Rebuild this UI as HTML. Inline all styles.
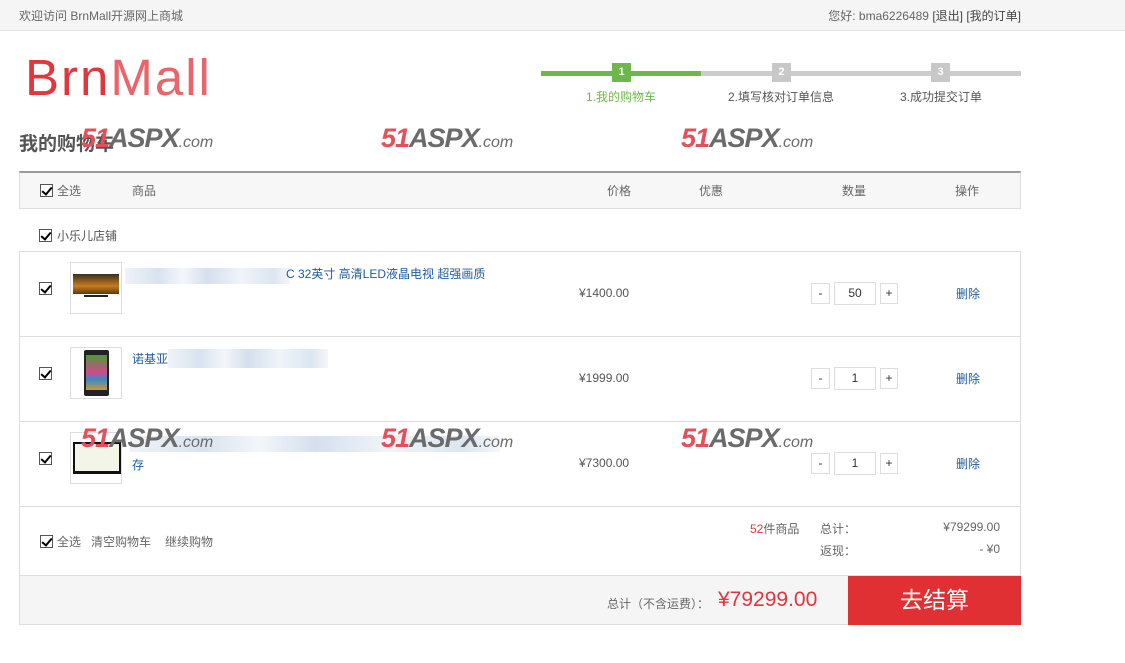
<!DOCTYPE html>
<html><head><meta charset="utf-8">
<style>
*{margin:0;padding:0;box-sizing:border-box}
body{width:1125px;height:663px;background:#fff;font-family:"Liberation Sans","Noto Sans CJK SC",sans-serif;font-size:12px;color:#666;position:relative;overflow:hidden}
.a{position:absolute;white-space:nowrap}
.cb{position:absolute;width:13px;height:13px;border:1px solid #555;background:#fff}
.cb:after{content:"";position:absolute;left:3px;top:0px;width:4px;height:8px;border:solid #000;border-width:0 2px 2px 0;transform:rotate(40deg)}
.wm{position:absolute;font:italic bold 27px "Liberation Sans",sans-serif;letter-spacing:-1px;white-space:nowrap}
.wm b{color:#e2505a}.wm i{color:#6b6b6b;font-style:italic}.wm s{text-decoration:none;font-size:16px;color:#6b6b6b;font-weight:normal;letter-spacing:0}
.step{position:absolute;top:63px;width:19px;height:19px;color:#fff;font-size:11px;font-weight:bold;text-align:center;line-height:19px}
.q{position:absolute;border:1px solid #ddd;background:#fff;text-align:center;color:#333}
.blue{color:#1f5b9f}
.blur{position:absolute;height:16px;background:linear-gradient(90deg,#eef2f7,#d4e0ee 20%,#f2f5f9 35%,#d0dcec 50%,#eef3f8 70%,#d8e3ef 90%,#f4f6fa);opacity:.9}
</style></head><body>
<div class="a" style="left:0;top:0;width:1125px;height:31px;background:#f5f5f5;border-bottom:1px solid #e3e3e3"></div>
<div class="a" style="left:19px;top:7px;color:#666">欢迎访问 BrnMall开源网上商城</div>
<div class="a" style="right:104px;top:7px;color:#666">您好: bma6226489 <span style="color:#444">[退出] [我的订单]</span></div>

<div class="a" style="left:25px;top:49px;font-size:51px;line-height:58px;color:#e0363c;letter-spacing:2px">Brn<span style="color:#e8666b">Mall</span></div>

<div class="a" style="left:541px;top:71px;width:160px;height:5px;background:#6db849"></div>
<div class="a" style="left:701px;top:71px;width:320px;height:5px;background:#ccc"></div>
<div class="step" style="left:612px;background:#6db849">1</div>
<div class="step" style="left:772px;background:#c8c8c8">2</div>
<div class="step" style="left:931px;background:#c8c8c8">3</div>
<div class="a" style="left:586px;top:88px;color:#6db849">1.我的购物车</div>
<div class="a" style="left:728px;top:88px;color:#555">2.填写核对订单信息</div>
<div class="a" style="left:900px;top:88px;color:#555">3.成功提交订单</div>

<div class="a" style="left:19px;top:129px;font-size:19px;font-weight:bold;color:#555">我的购物车</div>

<!-- header -->
<div class="a" style="left:19px;top:171px;width:1002px;height:38px;background:#f7f7f7;border-top:2px solid #999;border-left:1px solid #ddd;border-right:1px solid #ddd;border-bottom:1px solid #ddd"></div>
<div class="cb" style="left:40px;top:184px"></div>
<div class="a" style="left:57px;top:182px">全选</div>
<div class="a" style="left:132px;top:182px">商品</div>
<div class="a" style="left:607px;top:182px">价格</div>
<div class="a" style="left:699px;top:182px">优惠</div>
<div class="a" style="left:842px;top:182px">数量</div>
<div class="a" style="left:955px;top:182px">操作</div>

<div class="cb" style="left:39px;top:229px"></div>
<div class="a" style="left:57px;top:227px;color:#555">小乐儿店铺</div>

<!-- items -->
<div class="a" style="left:19px;top:251px;width:1002px;height:374px;border:1px solid #ddd"></div>
<div class="a" style="left:19px;top:336px;width:1002px;height:1px;background:#ddd"></div>
<div class="a" style="left:19px;top:421px;width:1002px;height:1px;background:#ddd"></div>
<div class="a" style="left:19px;top:506px;width:1002px;height:1px;background:#ddd"></div>
<div class="a" style="left:19px;top:575px;width:1002px;height:50px;background:#f5f5f5;border:1px solid #ddd"></div>

<!-- row1 -->
<div class="cb" style="left:39px;top:282px"></div>
<div class="a" style="left:70px;top:262px;width:52px;height:52px;border:1px solid #ddd;background:#fff"><div style="position:absolute;left:2px;top:11px;width:46px;height:20px;background:linear-gradient(#3a3020,#c87a20 60%,#5a3a10)"></div><div style="position:absolute;left:13px;top:32px;width:24px;height:2px;background:#222"></div></div>
<div class="blur" style="left:125px;top:268px;width:165px"></div>
<div class="a blue" style="left:286px;top:265px">C 32英寸 高清LED液晶电视 超强画质</div>
<div class="a" style="left:579px;top:286px;color:#555">¥1400.00</div>
<div class="q" style="left:811px;top:283px;width:19px;height:21px;line-height:19px">-</div>
<div class="q" style="left:834px;top:282px;width:42px;height:23px;line-height:21px">50</div>
<div class="q" style="left:880px;top:283px;width:18px;height:21px;line-height:19px">+</div>
<div class="a blue" style="left:956px;top:285px">删除</div>

<!-- row2 -->
<div class="cb" style="left:39px;top:367px"></div>
<div class="a" style="left:70px;top:347px;width:52px;height:52px;border:1px solid #ddd;background:#fff"><div style="position:absolute;left:13px;top:2px;width:25px;height:46px;background:#222;border-radius:2px"></div><div style="position:absolute;left:15px;top:7px;width:21px;height:35px;background:linear-gradient(#4a9a3a,#d04a8a 50%,#3a8ac8 70%,#c89a3a)"></div></div>
<div class="a blue" style="left:132px;top:350px">诺基亚</div>
<div class="blur" style="left:168px;top:349px;width:160px;height:19px"></div>
<div class="a" style="left:579px;top:371px;color:#555">¥1999.00</div>
<div class="q" style="left:811px;top:368px;width:19px;height:21px;line-height:19px">-</div>
<div class="q" style="left:834px;top:367px;width:42px;height:23px;line-height:21px">1</div>
<div class="q" style="left:880px;top:368px;width:18px;height:21px;line-height:19px">+</div>
<div class="a blue" style="left:956px;top:370px">删除</div>

<!-- row3 -->
<div class="cb" style="left:39px;top:452px"></div>
<div class="a" style="left:70px;top:432px;width:52px;height:52px;border:1px solid #ddd;background:#fff"><div style="position:absolute;left:2px;top:9px;width:48px;height:32px;background:#111"></div><div style="position:absolute;left:4px;top:11px;width:44px;height:27px;background:#f2f5e8"></div></div>
<div class="blur" style="left:130px;top:436px;width:370px"></div>
<div class="a blue" style="left:132px;top:456px">存</div>
<div class="a" style="left:579px;top:456px;color:#555">¥7300.00</div>
<div class="q" style="left:811px;top:453px;width:19px;height:21px;line-height:19px">-</div>
<div class="q" style="left:834px;top:452px;width:42px;height:23px;line-height:21px">1</div>
<div class="q" style="left:880px;top:453px;width:18px;height:21px;line-height:19px">+</div>
<div class="a blue" style="left:956px;top:455px">删除</div>

<!-- summary -->
<div class="cb" style="left:40px;top:535px"></div>
<div class="a" style="left:57px;top:533px">全选</div>
<div class="a" style="left:91px;top:533px">清空购物车</div>
<div class="a" style="left:165px;top:533px">继续购物</div>
<div class="a" style="left:750px;top:520px"><span style="color:#e0363c">52</span>件商品</div>
<div class="a" style="left:820px;top:520px">总计：</div>
<div class="a" style="left:820px;top:542px">返现：</div>
<div class="a" style="right:125px;top:520px">¥79299.00</div>
<div class="a" style="right:125px;top:542px">- ¥0</div>

<div class="a" style="left:607px;top:595px">总计（不含运费）：</div>
<div class="a" style="left:718px;top:588px;font-size:21px;color:#e0363c">¥79299.00</div>
<div class="a" style="left:848px;top:576px;width:173px;height:49px;background:#e03033;color:#fff;font-size:23px;text-align:center;line-height:49px">去结算</div>

<!-- watermarks -->
<div class="wm" style="left:81px;top:123px"><b>51</b><i>ASPX</i><s>.com</s></div>
<div class="wm" style="left:381px;top:123px"><b>51</b><i>ASPX</i><s>.com</s></div>
<div class="wm" style="left:681px;top:123px"><b>51</b><i>ASPX</i><s>.com</s></div>
<div class="wm" style="left:81px;top:423px"><b>51</b><i>ASPX</i><s>.com</s></div>
<div class="wm" style="left:381px;top:423px"><b>51</b><i>ASPX</i><s>.com</s></div>
<div class="wm" style="left:681px;top:423px"><b>51</b><i>ASPX</i><s>.com</s></div>
</body></html>
